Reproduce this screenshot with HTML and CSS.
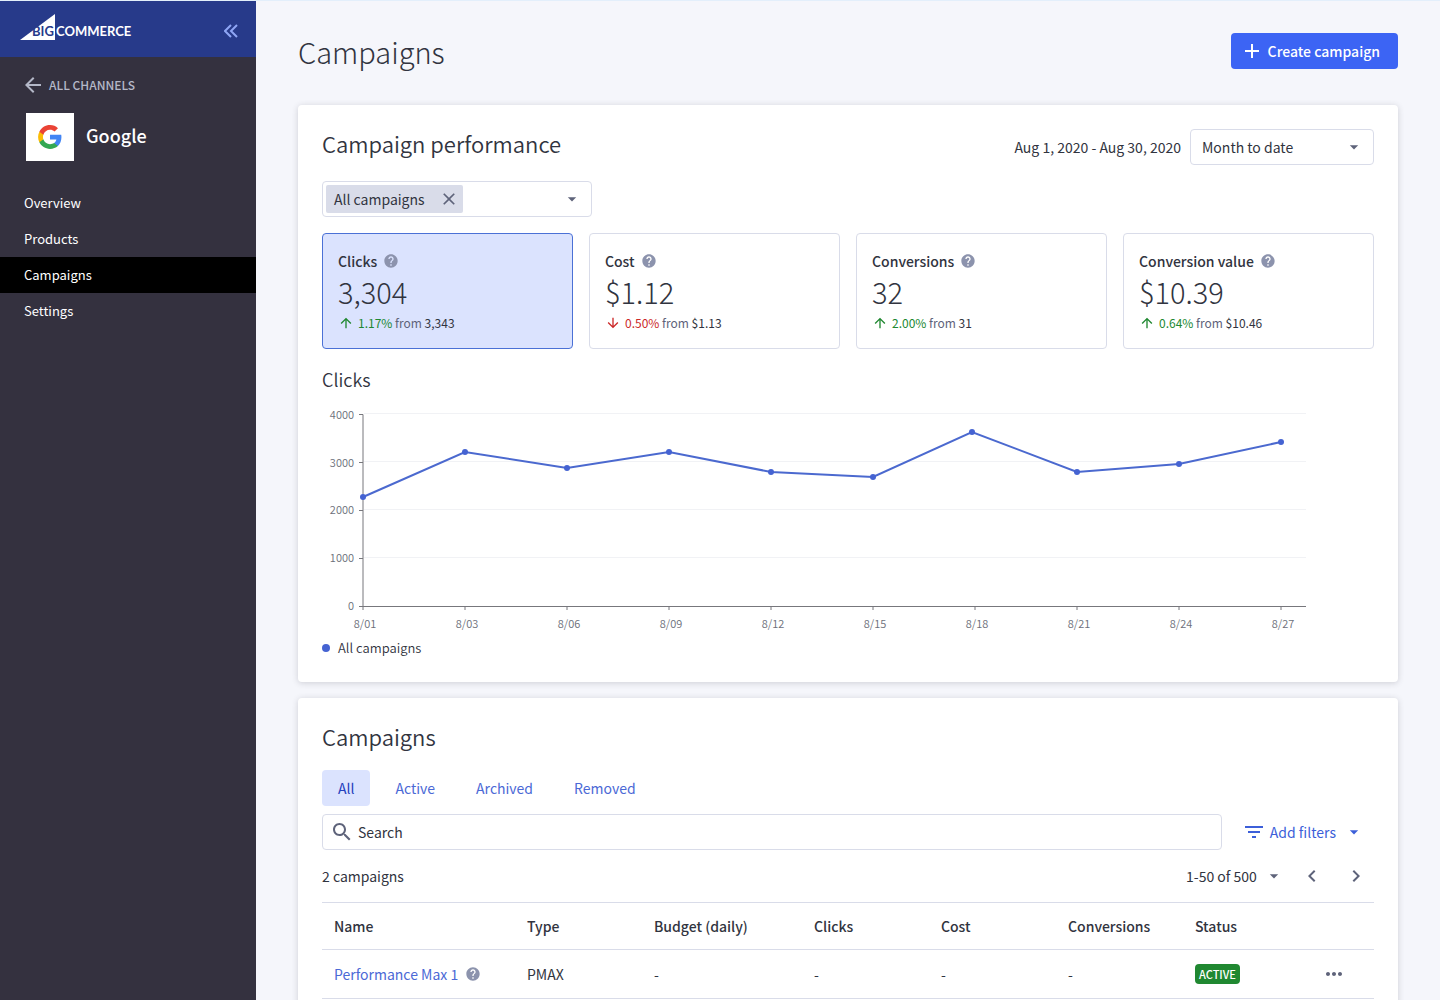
FILE: index.html
```html
<!DOCTYPE html>
<html lang="en">
<head>
    <meta charset="UTF-8">
    <meta name="viewport" content="width=device-width, initial-scale=1.0">
    <title>Campaigns</title>
    <link rel="stylesheet" href="styles.css">
</head>
<body>
    <!-- Shared icons -->
    <svg class="sprite" aria-hidden="true">
        <symbol id="caret" viewBox="0 0 24 24"><path d="M7 10l5 5 5-5z"/></symbol>
        <symbol id="help" viewBox="0 0 24 24"><path d="M12 2C6.48 2 2 6.48 2 12s4.48 10 10 10 10-4.480 10-10S17.520 2 12 2zm1 17h-2v-2h2v2zm2.070-7.750l-.9.920C13.450 12.900 13 13.500 13 15h-2v-.5c0-1.100.450-2.100 1.170-2.830l1.240-1.260c.370-.360.590-.860.590-1.410 0-1.100-.9-2-2-2s-2 .9-2 2H8c0-2.210 1.790-4 4-4s4 1.790 4 4c0 .880-.360 1.680-.930 2.250z"/></symbol>
        <symbol id="up" viewBox="0 0 24 24"><path d="M4 12l1.410 1.410L11 7.830V20h2V7.830l5.580 5.590L20 12l-8-8-8 8z"/></symbol>
        <symbol id="down" viewBox="0 0 24 24"><path d="M20 12l-1.410-1.410L13 16.170V4h-2v12.170l-5.580-5.590L4 12l8 8 8-8z"/></symbol>
    </svg>

    <div class="layout">
        <aside class="sidebar">
            <div class="sidebar-header">
                <a href="#" class="logo" aria-label="BigCommerce">
                    <svg width="116" height="28" viewBox="0 0 116 28">
                        <path class="logo-sail" d="M0 25L35 -1v26z"/>
                        <text class="logo-big" x="12" y="21">BIG</text>
                        <text class="logo-commerce" x="36" y="21">COMMERCE</text>
                    </svg>
                </a>
                <button type="button" class="collapse" aria-label="Collapse menu">
                    <svg width="14" height="14" viewBox="0 0 14 14"><path d="M7 1L1 7l6 6M13 1L7 7l6 6"/></svg>
                </button>
            </div>
            <a href="#" class="back">
                <svg class="icon" viewBox="0 0 24 24"><path d="M20 11H7.830l5.590-5.590L12 4l-8 8 8 8 1.410-1.410L7.830 13H20v-2z"/></svg>
                ALL CHANNELS
            </a>
            <div class="channel">
                <span class="channel-logo">
                    <svg width="26" height="26" viewBox="0 0 24 24">
                        <path fill="#4285f4" d="M22.560 12.250c0-.780-.070-1.530-.2-2.250H12v4.260h5.920c-.260 1.370-1.040 2.530-2.210 3.310v2.770h3.570c2.080-1.920 3.280-4.740 3.280-8.090z"/>
                        <path fill="#34a853" d="M12 23c2.970 0 5.460-.980 7.280-2.660l-3.570-2.770c-.980.660-2.230 1.060-3.710 1.060-2.860 0-5.290-1.930-6.160-4.530H2.180v2.840C3.990 20.530 7.700 23 12 23z"/>
                        <path fill="#fbbc05" d="M5.840 14.090c-.220-.660-.350-1.360-.350-2.090s.130-1.430.350-2.090V7.070H2.180C1.430 8.550 1 10.220 1 12s.430 3.450 1.180 4.930l3.660-2.840z"/>
                        <path fill="#ea4335" d="M12 5.380c1.620 0 3.060.560 4.210 1.640l3.150-3.150C17.450 2.090 14.970 1 12 1 7.700 1 3.990 3.470 2.180 7.070l3.660 2.840c.870-2.600 3.300-4.530 6.160-4.530z"/>
                    </svg>
                </span>
                <span class="channel-name">Google</span>
            </div>
            <nav class="nav">
                <a href="#">Overview</a>
                <a href="#">Products</a>
                <a href="#" class="current">Campaigns</a>
                <a href="#">Settings</a>
            </nav>
        </aside>

        <main class="main">
            <div class="page-header">
                <h1>Campaigns</h1>
                <button type="button" class="create">
                    <svg class="icon" viewBox="0 0 24 24"><path d="M19 13h-6v6h-2v-6H5v-2h6V5h2v6h6v2z"/></svg>
                    Create campaign
                </button>
            </div>

            <!-- Campaign performance -->
            <section class="card">
                <div class="card-header">
                    <h2>Campaign performance</h2>
                    <div class="period">
                        <label for="period">Aug 1, 2020 - Aug 30, 2020</label>
                        <div class="select period-select">
                            <select id="period">
                                <option>Month to date</option>
                            </select>
                            <svg class="caret"><use href="#caret"/></svg>
                        </div>
                    </div>
                </div>

                <div class="multiselect">
                    <span class="chip">
                        All campaigns
                        <button type="button" aria-label="Remove All campaigns">
                            <svg class="icon-small" viewBox="0 0 24 24"><path d="M19 6.410L17.590 5 12 10.590 6.410 5 5 6.410 10.590 12 5 17.590 6.410 19 12 13.410 17.590 19 19 17.590 13.410 12z"/></svg>
                        </button>
                    </span>
                    <button type="button" aria-label="Choose campaigns">
                        <svg class="caret"><use href="#caret"/></svg>
                    </button>
                </div>

                <div class="stats">
                    <button type="button" class="stat selected">
                        <span class="stat-label">Clicks <svg class="help"><use href="#help"/></svg></span>
                        <span class="stat-value">3,304</span>
                        <span class="stat-change"><svg class="up"><use href="#up"/></svg><span><span class="up">1.17%</span> from <b>3,343</b></span></span>
                    </button>
                    <button type="button" class="stat">
                        <span class="stat-label">Cost <svg class="help"><use href="#help"/></svg></span>
                        <span class="stat-value">$1.12</span>
                        <span class="stat-change"><svg class="down"><use href="#down"/></svg><span><span class="down">0.50%</span> from <b>$1.13</b></span></span>
                    </button>
                    <button type="button" class="stat">
                        <span class="stat-label">Conversions <svg class="help"><use href="#help"/></svg></span>
                        <span class="stat-value">32</span>
                        <span class="stat-change"><svg class="up"><use href="#up"/></svg><span><span class="up">2.00%</span> from <b>31</b></span></span>
                    </button>
                    <button type="button" class="stat">
                        <span class="stat-label">Conversion value <svg class="help"><use href="#help"/></svg></span>
                        <span class="stat-value">$10.39</span>
                        <span class="stat-change"><svg class="up"><use href="#up"/></svg><span><span class="up">0.64%</span> from <b>$10.46</b></span></span>
                    </button>
                </div>

                <h3>Clicks</h3>
                <svg class="chart" viewBox="0 0 1052 245" role="img" aria-label="Clicks by day">
                    <path class="grid" d="M42 20.500H984M42 68.500H984M42 116.500H984M42 164.500H984"/>
                    <path class="axis" d="M37 21.500H41V213.500M37 69.500h4M37 117.500h4M37 165.500h4M37 213.500H984M41 213v4M143 213v4M245 213v4M347 213v4M449 213v4M551 213v4M653 213v4M755 213v4M857 213v4M959 213v4"/>
                    <g class="y-labels">
                        <text x="32" y="26">4000</text>
                        <text x="32" y="74">3000</text>
                        <text x="32" y="121">2000</text>
                        <text x="32" y="169">1000</text>
                        <text x="32" y="217">0</text>
                    </g>
                    <g class="x-labels">
                        <text x="43" y="235">8/01</text>
                        <text x="145" y="235">8/03</text>
                        <text x="247" y="235">8/06</text>
                        <text x="349" y="235">8/09</text>
                        <text x="451" y="235">8/12</text>
                        <text x="553" y="235">8/15</text>
                        <text x="655" y="235">8/18</text>
                        <text x="757" y="235">8/21</text>
                        <text x="859" y="235">8/24</text>
                        <text x="961" y="235">8/27</text>
                    </g>
                    <polyline class="line" points="41,104 143,59 245,75 347,59 449,79 551,84 650,39 755,79 857,71 959,49"/>
                    <g class="points">
                        <circle cx="41" cy="104" r="3"/>
                        <circle cx="143" cy="59" r="3"/>
                        <circle cx="245" cy="75" r="3"/>
                        <circle cx="347" cy="59" r="3"/>
                        <circle cx="449" cy="79" r="3"/>
                        <circle cx="551" cy="84" r="3"/>
                        <circle cx="650" cy="39" r="3"/>
                        <circle cx="755" cy="79" r="3"/>
                        <circle cx="857" cy="71" r="3"/>
                        <circle cx="959" cy="49" r="3"/>
                    </g>
                </svg>
                <div class="legend">All campaigns</div>
            </section>

            <!-- Campaign list -->
            <section class="card">
                <h2>Campaigns</h2>
                <div class="tabs" role="tablist">
                    <button type="button" role="tab" aria-selected="true" class="active">All</button>
                    <button type="button" role="tab" aria-selected="false">Active</button>
                    <button type="button" role="tab" aria-selected="false">Archived</button>
                    <button type="button" role="tab" aria-selected="false">Removed</button>
                </div>

                <div class="toolbar">
                    <label class="search">
                        <svg class="icon" viewBox="0 0 24 24"><path d="M15.500 14h-.790l-.280-.270C15.410 12.590 16 11.110 16 9.500 16 5.910 13.090 3 9.500 3S3 5.910 3 9.500 5.910 16 9.500 16c1.610 0 3.090-.590 4.230-1.570l.270.280v.790l5 4.990L20.490 19l-4.990-5zm-6 0C7.010 14 5 11.990 5 9.500S7.010 5 9.500 5 14 7.010 14 9.500 11.990 14 9.500 14z"/></svg>
                        <input type="search" placeholder="Search" aria-label="Search">
                    </label>
                    <button type="button" class="filters">
                        <svg class="icon" viewBox="0 0 24 24"><path d="M10 18h4v-2h-4v2zM3 6v2h18V6H3zm3 7h12v-2H6v2z"/></svg>
                        Add filters
                        <svg class="caret"><use href="#caret"/></svg>
                    </button>
                </div>

                <div class="table-info">
                    <span>2 campaigns</span>
                    <div class="pagination">
                        <div class="select page-select">
                            <select aria-label="Items shown">
                                <option>1-50 of 500</option>
                            </select>
                            <svg class="caret"><use href="#caret"/></svg>
                        </div>
                        <button type="button" aria-label="Previous page">
                            <svg class="icon" viewBox="0 0 24 24"><path d="M15.410 7.410L14 6l-6 6 6 6 1.410-1.410L10.830 12z"/></svg>
                        </button>
                        <button type="button" aria-label="Next page">
                            <svg class="icon" viewBox="0 0 24 24"><path d="M10 6L8.590 7.410 13.170 12l-4.580 4.590L10 18l6-6z"/></svg>
                        </button>
                    </div>
                </div>

                <table>
                    <colgroup>
                        <col class="col-name">
                        <col class="col-short">
                        <col class="col-budget">
                        <col class="col-short">
                        <col class="col-short">
                        <col class="col-short">
                        <col>
                        <col>
                    </colgroup>
                    <thead>
                        <tr>
                            <th>Name</th>
                            <th>Type</th>
                            <th>Budget (daily)</th>
                            <th>Clicks</th>
                            <th>Cost</th>
                            <th>Conversions</th>
                            <th>Status</th>
                            <th></th>
                        </tr>
                    </thead>
                    <tbody>
                        <tr>
                            <td><span class="name"><a href="#">Performance Max 1</a> <svg class="help"><use href="#help"/></svg></span></td>
                            <td>PMAX</td>
                            <td>-</td>
                            <td>-</td>
                            <td>-</td>
                            <td>-</td>
                            <td><span class="badge">ACTIVE</span></td>
                            <td class="actions">
                                <button type="button" aria-label="More actions">
                                    <svg class="icon" viewBox="0 0 24 24"><path d="M6 10c-1.100 0-2 .9-2 2s.9 2 2 2 2-.9 2-2-.9-2-2-2zm12 0c-1.100 0-2 .9-2 2s.9 2 2 2 2-.9 2-2-.9-2-2-2zm-6 0c-1.100 0-2 .9-2 2s.9 2 2 2 2-.9 2-2-.9-2-2-2z"/></svg>
                                </button>
                            </td>
                        </tr>
                    </tbody>
                </table>
            </section>
        </main>
    </div>
</body>
</html>
```
FILE: styles.css
```css
/* Basic Styles */
* {
    box-sizing: border-box;
}
body {
    margin: 0;
    font-family: "Noto Sans CJK SC", "Noto Sans", sans-serif;
    font-size: 14px;
    line-height: 24px;
    color: #313440;
    background-color: #f5f6fb;
}
button, input, select {
    font: inherit;
    color: inherit;
    margin: 0;
}
button {
    display: flex;
    align-items: center;
    justify-content: center;
    padding: 0;
    border: none;
    background: none;
    cursor: pointer;
}
a {
    text-decoration: none;
}
h1, h2, h3 {
    margin: 0;
    font-weight: 350;
}
h1 {
    font-size: 29px;
    line-height: 36px;
    font-weight: 200;
}
h2 {
    font-size: 22px;
    line-height: 28px;
}
h3 {
    margin-top: 16px;
    font-size: 18px;
    line-height: 28px;
}

/* Icons */
svg {
    display: block;
    flex: none;
    fill: currentColor;
}
.sprite {
    position: absolute;
    width: 0;
    height: 0;
}
.icon {
    width: 24px;
    height: 24px;
}
.icon-small, .caret {
    width: 20px;
    height: 20px;
}
.caret {
    color: #5e637a;
}
.help {
    width: 16px;
    height: 16px;
    color: #8c93ad;
}

/* Layout */
.layout {
    display: flex;
    height: 100vh;
    border-top: 1px solid #e3effb;
}
.main {
    flex: 1;
    min-width: 0;
    padding: 32px 42px;
    overflow-y: auto;
    scrollbar-width: none;
}

/* Sidebar */
.sidebar {
    flex: none;
    width: 256px;
    background-color: #34313f;
    color: white;
}
.sidebar-header {
    display: flex;
    align-items: center;
    justify-content: space-between;
    height: 56px;
    padding: 0 18px 0 20px;
    background-color: #273a8a;
}
.logo svg {
    overflow: visible;
}
.logo-sail, .logo-commerce {
    fill: white;
}
.logo-big {
    fill: #273a8a;
}
.logo text {
    font-family: Lato, sans-serif;
    font-size: 13px;
    font-weight: 700;
}
.collapse {
    padding-top: 4px;
}
.collapse svg {
    fill: none;
    stroke: #8fa6f5;
    stroke-width: 2;
}
.back {
    display: flex;
    gap: 4px;
    padding: 16px 21px 0;
    font-size: 12px;
    font-weight: 500;
    color: #b4b8c8;
}
.channel {
    display: flex;
    align-items: center;
    gap: 12px;
    padding: 16px 26px 24px;
    font-size: 18px;
    font-weight: 500;
}
.channel-logo {
    display: flex;
    align-items: center;
    justify-content: center;
    width: 48px;
    height: 48px;
    background-color: white;
}
.channel-name {
    padding-bottom: 5px;
}
.nav a {
    display: block;
    padding: 6px 24px;
    font-size: 13px;
    color: white;
}
.nav .current {
    background-color: black;
}

/* Page Header */
.page-header {
    display: flex;
    align-items: flex-start;
    justify-content: space-between;
    margin-bottom: 36px;
}
.create {
    gap: 4px;
    height: 36px;
    padding: 0 18px 0 9px;
    border-radius: 4px;
    font-weight: 500;
    color: white;
    background-color: #3c64f4;
}

/* Cards */
.card {
    margin-bottom: 16px;
    padding: 24px;
    border-radius: 4px;
    background-color: white;
    box-shadow: 0 1px 6px rgba(49, 52, 64, 0.2);
}
.card-header {
    display: flex;
    align-items: flex-start;
    justify-content: space-between;
    margin-bottom: 16px;
}
.period {
    display: flex;
    align-items: center;
    gap: 9px;
}

/* Select */
.select {
    display: grid;
    align-items: center;
    height: 36px;
}
.select select, .select .caret {
    grid-area: 1 / 1;
}
.select select {
    width: 100%;
    height: 100%;
    appearance: none;
    border: 1px solid #d9dce9;
    border-radius: 4px;
    background: white;
}
.select .caret {
    justify-self: end;
    pointer-events: none;
}
.period-select {
    width: 184px;
}
.period-select select {
    padding: 0 11px;
}
.period-select .caret {
    margin-right: 10px;
}
.page-select select {
    padding: 0 28px 0 8px;
    border-color: transparent;
}
.page-select .caret {
    margin-right: 2px;
}

.multiselect {
    display: flex;
    align-items: center;
    justify-content: space-between;
    width: 270px;
    height: 36px;
    margin-bottom: 16px;
    padding: 0 9px 0 3px;
    border: 1px solid #d9dce9;
    border-radius: 4px;
}
.chip {
    display: flex;
    align-items: center;
    gap: 14px;
    height: 28px;
    padding: 0 4px 0 8px;
    border-radius: 2px;
    background-color: #d9dce9;
}
.chip button {
    color: #5e637a;
}

/* Stats */
.stats {
    display: grid;
    grid-template-columns: repeat(4, 1fr);
    gap: 16px;
}
.stat {
    flex-direction: column;
    align-items: flex-start;
    padding: 15px;
    border: 1px solid #d9dce9;
    border-radius: 4px;
    text-align: left;
}
.stat.selected {
    border-color: #4b71d6;
    background-color: #dbe3fe;
}
.stat-label {
    display: flex;
    align-items: center;
    gap: 6px;
    font-weight: 500;
}
.stat-value {
    margin-bottom: 4px;
    font-size: 29px;
    line-height: 36px;
    font-weight: 200;
}
.stat-change {
    display: flex;
    align-items: center;
    gap: 4px;
    font-size: 12px;
    line-height: 20px;
    color: #5e637a;
}
.stat-change svg {
    width: 16px;
    height: 16px;
}
.stat-change b {
    font-weight: 400;
    color: #313440;
}
.up {
    color: #208831;
}
.down {
    color: #cc2929;
}

/* Chart */
.chart {
    width: 100%;
}
.chart text {
    font-size: 11px;
    font-weight: 350;
    fill: #6c6f7a;
}
.y-labels {
    text-anchor: end;
}
.x-labels {
    text-anchor: middle;
}
.grid {
    stroke: #f1f2f5;
}
.axis {
    fill: none;
    stroke: #77777c;
}
.line {
    fill: none;
    stroke: #4b69cf;
    stroke-width: 2;
}
.points {
    fill: #4563d2;
}
.legend {
    display: flex;
    align-items: center;
    gap: 8px;
    font-size: 13px;
    line-height: 20px;
    font-weight: 350;
}
.legend::before {
    content: "";
    width: 8px;
    height: 8px;
    border-radius: 50%;
    background-color: #4563d2;
}

/* Tabs and Toolbar */
.tabs {
    display: flex;
    gap: 9px;
    margin: 20px 0 8px;
}
.tabs button {
    height: 36px;
    padding: 0 16px;
    border-radius: 4px;
    color: #4b69d6;
}
.tabs .active {
    color: #2440bd;
    background-color: #dbe3fe;
}
.toolbar {
    display: flex;
    gap: 8px;
}
.search {
    display: flex;
    flex: 1;
    align-items: center;
    gap: 4px;
    height: 36px;
    padding: 0 7px;
    border: 1px solid #d9dce9;
    border-radius: 4px;
    color: #5e637a;
}
.search input {
    flex: 1;
    padding: 0;
    border: none;
    outline: none;
    background: none;
}
.search input::placeholder {
    color: #313440;
}
.filters {
    gap: 4px;
    padding: 0 10px 0 12px;
    color: #3c5fd9;
}
.filters .caret {
    margin-left: 4px;
    color: inherit;
}
.table-info {
    display: flex;
    align-items: center;
    justify-content: space-between;
    margin: 8px 0;
}
.pagination {
    display: flex;
    gap: 8px;
}
.pagination button {
    width: 36px;
    color: #5e637a;
}

/* Table */
table {
    width: 100%;
    table-layout: fixed;
    border-collapse: collapse;
    border-top: 1px solid #d9dce9;
}
.col-name {
    width: 193px;
}
.col-short {
    width: 127px;
}
.col-budget {
    width: 160px;
}
th, td {
    padding: 11px 12px;
    border-bottom: 1px solid #d9dce9;
    text-align: left;
    white-space: nowrap;
}
th {
    font-weight: 500;
}
td {
    padding: 12px;
}
.name {
    display: flex;
    align-items: center;
    gap: 7px;
}
.name a {
    color: #4b69d6;
}
.badge {
    display: block;
    width: max-content;
    padding: 0 4px;
    border-radius: 4px;
    font-size: 11px;
    line-height: 20px;
    font-weight: 500;
    color: white;
    background-color: #208831;
}
.actions button {
    margin-left: auto;
    margin-right: 16px;
    color: #5e637a;
}
```
